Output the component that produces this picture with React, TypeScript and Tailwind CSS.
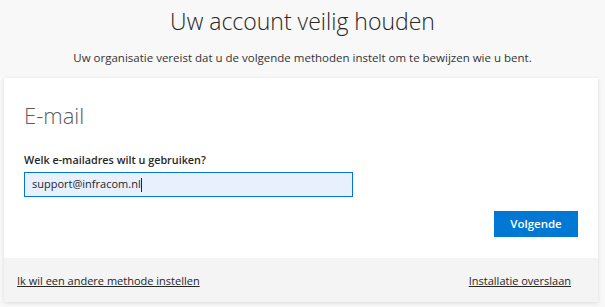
export default function App() {
  return (
    <div className="w-[605px] h-[307px] bg-[#f8f8f8] overflow-hidden text-[#262626]" style={{ fontFamily: '"Open Sans", "Noto Sans", sans-serif' }}>
      {/* Header */}
      <div className="h-[78px] pt-[6px] text-center">
        <h1 className="text-[23px] font-light leading-[30px] text-[#262626]">Uw account veilig houden</h1>
        <p className="mt-[14px] text-[11.5px] leading-[16px] text-[#333]">
          Uw organisatie vereist dat u de volgende methoden instelt om te bewijzen wie u bent.
        </p>
      </div>

      {/* Card */}
      <div className="ml-[4px] w-[594px] bg-white shadow-[0_1px_4px_rgba(0,0,0,0.12)]">
        <div className="h-[180px] px-[20px] pt-[22px]">
          <div className="text-[22px] font-light leading-[30px] text-[#5c5c5c]">E-mail</div>
          <label className="block mt-[22px] text-[10.8px] font-semibold leading-[16px] text-[#262626]">
            Welk e-mailadres wilt u gebruiken?
          </label>
          <div className="mt-[4px] w-[329px] h-[25px] border-[1.5px] border-[#0078d4] bg-[#e8f0fe] flex items-center px-[7px] text-[11px] text-[#262626]">
            support@infracom.nl
            <span className="inline-block w-px h-[14px] bg-[#262626]" />
          </div>
          <div className="flex justify-end mt-[14px]">
            <button className="w-[84px] h-[26px] bg-[#0078d4] text-white text-[11.5px] font-semibold">Volgende</button>
          </div>
        </div>
        <div className="bg-[#f4f4f4] h-[44px] flex items-center justify-between pl-[13px] pr-[27px] pt-[2px] text-[11px] text-[#262626]">
          <a className="underline">Ik wil een andere methode instellen</a>
          <a className="underline">Installatie overslaan</a>
        </div>
      </div>
    </div>
  )
}
